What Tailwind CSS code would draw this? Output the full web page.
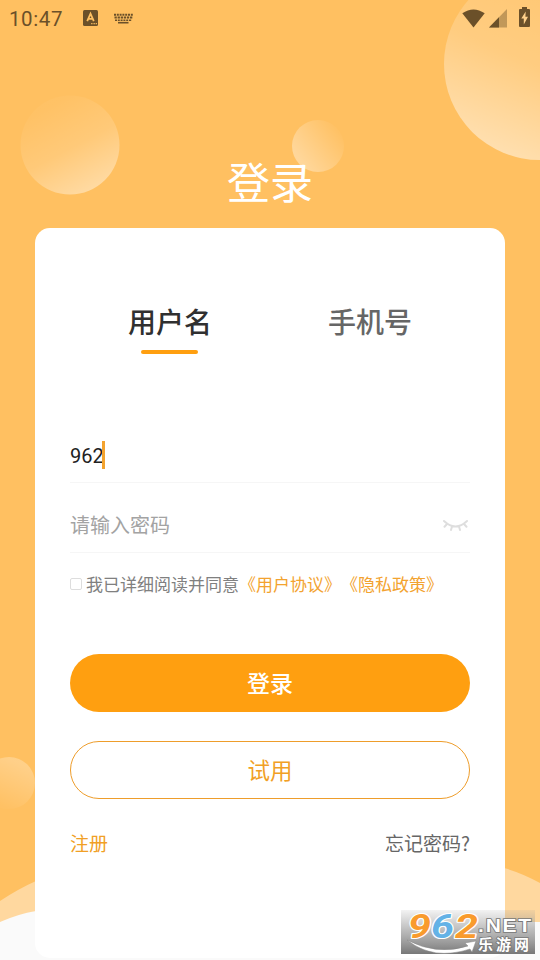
<!DOCTYPE html>
<html lang="zh-CN">
<head>
<meta charset="utf-8">
<title>登录</title>
<script src="https://cdn.jsdelivr.net/npm/@tailwindcss/browser@4"></script>
</head>
<body class="w-[540px] h-[960px] overflow-hidden bg-[#ffc061] font-[Roboto,'Noto_Sans_CJK_SC',sans-serif]">
<div class="relative w-[540px] h-[960px] overflow-hidden">
  <!-- decorative backdrop -->
  <svg class="absolute inset-0" width="540" height="960" viewBox="0 0 540 960">
    <defs>
      <linearGradient id="a" x1=".3" y1=".1" x2=".75" y2=".95"><stop offset="0" stop-color="#fff" stop-opacity=".03"/><stop offset=".5" stop-color="#fff" stop-opacity=".15"/><stop offset="1" stop-color="#fff" stop-opacity=".42"/></linearGradient>
      <linearGradient id="b" x1=".65" y1=".05" x2=".25" y2=".95"><stop offset="0" stop-color="#fff" stop-opacity=".1"/><stop offset=".5" stop-color="#fff" stop-opacity=".2"/><stop offset="1" stop-color="#fff" stop-opacity=".5"/></linearGradient>
      <linearGradient id="c" x1=".9" y1=".2" x2=".15" y2=".75"><stop offset="0" stop-color="#fff" stop-opacity=".02"/><stop offset="1" stop-color="#fff" stop-opacity=".36"/></linearGradient>
      <linearGradient id="d" x1=".75" y1=".15" x2=".4" y2=".95"><stop offset="0" stop-color="#fff" stop-opacity=".25"/><stop offset="1" stop-color="#fff" stop-opacity=".02"/></linearGradient>
    </defs>
    <circle cx="70" cy="145" r="49.500" fill="url(#a)"/>
    <circle cx="540" cy="64" r="96" fill="url(#b)"/>
    <circle cx="318" cy="146" r="26" fill="url(#c)"/>
    <circle cx="9" cy="783" r="26" fill="url(#d)"/>
    <path d="M0 901Q18 889 36 881L504 868Q522 873 540 883V960H0Z" fill="#ffd89f"/>
    <path d="M0 922Q18 914 36 911L200 922H540V960H0Z" fill="#fafafa"/>
  </svg>

  <div class="relative flex h-full flex-col items-center">
    <header class="flex h-9 w-full items-center pl-[9px] pr-[10px] text-[#6b5029]">
      <span class="w-[74px] text-[20.500px] leading-9 tracking-[0.6px] pt-0.5">10:47</span>
      <svg width="15" height="16" viewBox="0 0 15 16"><rect width="15" height="16" rx="1.500" fill="currentColor"/><path d="M4.200 11.200L7.500 3.700L10.800 11.200M5.400 8.900h4.200" fill="none" stroke="#ffc061" stroke-width="1.800"/><path d="M8.200 13h1.300v1.200H8.200zM10.500 13h1.300v1.200h-1.300zM12.700 13h1.200v1.200h-1.200z" fill="#ffc061"/></svg>
      <svg class="ml-4" width="19" height="11" viewBox="0 0 19 11" fill="none" stroke="currentColor"><path d="M0 1.700h19" stroke-width="2" stroke-dasharray="2 .8"/><path d="M.5 4.500h18" stroke-width="2" stroke-dasharray="2.300 .8"/><path d="M1 7.200h17" stroke-width="1.600" stroke-dasharray="2 .8"/><path d="M4 9.700h10.500" stroke-width="1.600"/></svg>
      <div class="ml-auto flex items-center">
        <svg width="23" height="19" viewBox="0 0 23 19" fill="currentColor"><path d="M.3 4.300Q11.500-3.500 22.700 4.300L11.500 18.500Z"/></svg>
        <svg class="ml-[4px]" width="18" height="19" viewBox="0 0 18 19" fill="currentColor"><path d="M18 0V18.500H0Z" opacity=".42"/><path d="M10 8.200V18.500H0Z"/></svg>
        <svg class="-mt-[2px] ml-[12px]" width="11" height="20" viewBox="0 0 11 20"><path d="M3 0h5v2h2q1 0 1 1v16q0 1-1 1H1q-1 0-1-1V3q0-1 1-1h2Z" fill="currentColor"/><path d="M6.700 4.500L2.300 11.500H4.800V17.500L9 9.700H6.400Z" fill="#ffd08a"/></svg>
      </div>
    </header>

    <h1 class="mt-[117px] h-[75px] text-[43px] leading-[62px] text-white">登录</h1>

    <main class="flex h-[730px] w-[470px] flex-col rounded-[15px] bg-white px-[35px]">
      <nav class="mt-[74px] grid grid-cols-2 text-center text-[28px] leading-[44px] font-medium text-[#666]">
        <div class="flex flex-col items-center text-[#303030]">用户名<i class="mt-1 mr-0.5 h-1 w-[57px] rounded-full bg-[#ff9f10]"></i></div>
        <div>手机号</div>
      </nav>

      <div class="mt-[72px] flex h-[57px] items-center border-b border-[#f6f6f6] pt-[2px] text-[20px] text-[#222]">
        <span class="pt-px">962</span><i class="-ml-0.5 h-7 w-[3px] bg-[#f3a32f]"></i>
      </div>
      <div class="flex h-[70px] items-center justify-between border-b border-[#f6f6f6] pt-[16px] text-[20px] text-[#a3a3a3]">
        <span>请输入密码</span>
        <svg class="mr-[1px]" width="27" height="14" viewBox="0 0 27 14" fill="none" stroke="#dedede" stroke-width="2" stroke-linecap="round"><path d="M2 2Q13.500 13 25 2M5 5L2.500 7.700M10 7.500L9 11M17 7.500L18 11M22 5L24.500 7.700"/></svg>
      </div>
      <div class="mt-[17px] flex h-[30px] items-center text-[17px] whitespace-nowrap text-[#808080] [text-spacing-trim:space-all]">
        <i class="mr-1 -mt-[3px] size-3 shrink-0 rounded-[2px] border border-[#ddd]"></i>
        <span class="pt-0.5">我已详细阅读并同意</span><span class="pt-0.5 text-[#f3a32f]">《用户协议》《隐私政策》</span>
      </div>

      <button class="mt-[54px] h-[58px] shrink-0 rounded-full bg-[#ff9f10] pt-1 text-[23px] font-medium text-white">登录</button>
      <button class="mt-[29px] h-[58px] shrink-0 rounded-full border border-[#ee9d2b] pt-1 text-[22.500px] text-[#f19f25]">试用</button>
      <div class="mt-[29px] flex items-center justify-between font-['Noto_Sans_CJK_SC',sans-serif] text-[19px] leading-[30px] text-[#666]">
        <a class="text-[#f19f25]">注册</a><a>忘记密码?</a>
      </div>
    </main>
  </div>

  <!-- corner watermark -->
  <svg class="absolute left-[401px] top-[910px] overflow-visible" width="134" height="44" viewBox="0 0 134 44">
    <defs><linearGradient id="w" x2="0" y2="1"><stop offset="0" stop-color="#999" stop-opacity=".12"/><stop offset=".5" stop-color="#999" stop-opacity=".7"/><stop offset="1" stop-color="#777"/></linearGradient></defs>
    <rect width="134" height="44" fill="url(#w)"/>
    <path d="M6 30Q36 46 67 36L64 33L75 31L71 42L69 39Q32 51 6 30Z" fill="#fff" stroke="#888" stroke-width=".5"/>
    <g font-family="Roboto, sans-serif" font-weight="700" font-style="italic" font-size="33" stroke="#fff" stroke-width="2.200" paint-order="stroke" stroke-linejoin="round">
      <text x="7" y="28" textLength="23" lengthAdjust="spacingAndGlyphs" fill="#f99b2d">9</text>
      <text x="30" y="28" textLength="23" lengthAdjust="spacingAndGlyphs" fill="#64b2e6">6</text>
      <text x="54" y="28" textLength="23" lengthAdjust="spacingAndGlyphs" fill="#f99b2d">2</text>
    </g>
    <g fill="#fff" stroke="#777" stroke-width="1.600" paint-order="stroke" font-weight="700">
      <text x="77" y="22" font-family="Liberation Sans, sans-serif" font-size="17.500" letter-spacing="1.500" textLength="55" lengthAdjust="spacingAndGlyphs">.NET</text>
      <text x="77" y="40" font-family="Noto Sans CJK SC, sans-serif" font-size="15" textLength="51" lengthAdjust="spacing">乐游网</text>
    </g>
  </svg>
</div>
</body>
</html>
